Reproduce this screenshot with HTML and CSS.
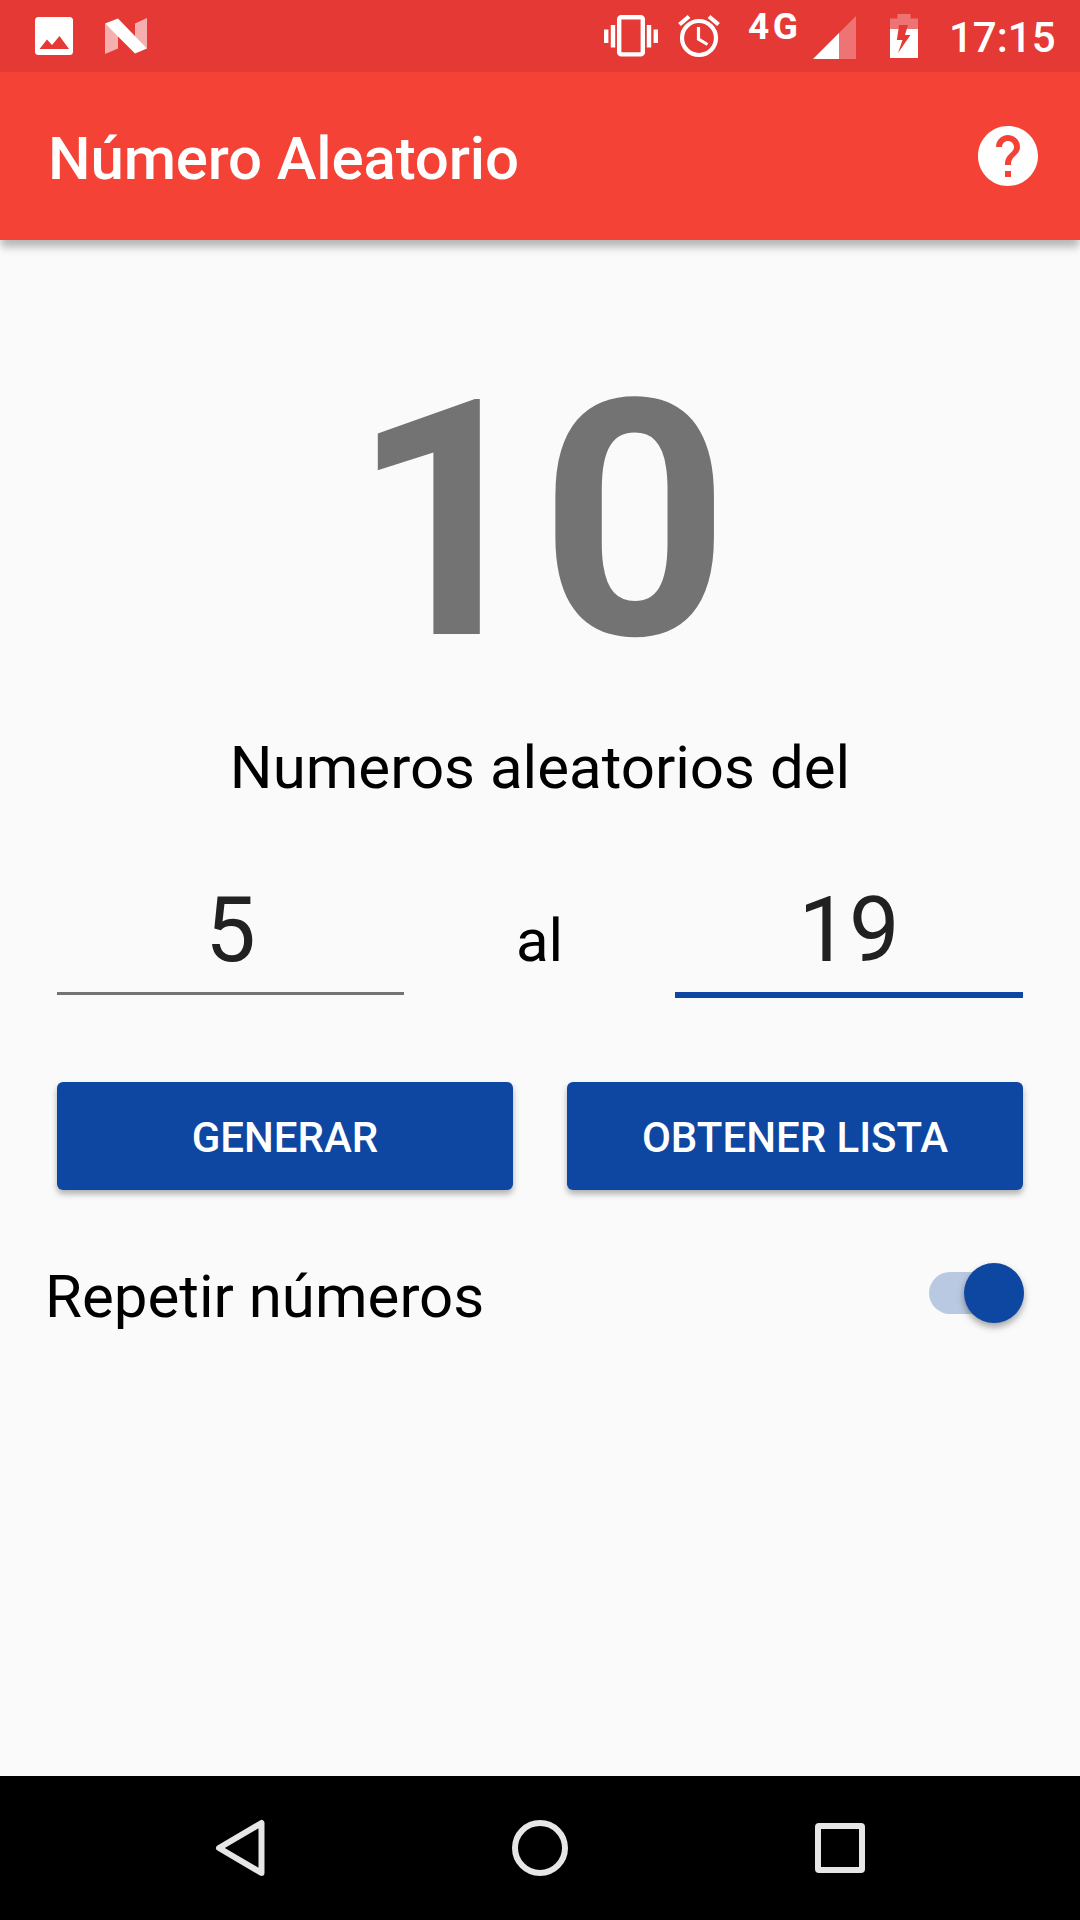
FILE: index.html
```html
<!DOCTYPE html>
<html lang="es">

<head>
    <meta charset="UTF-8">
    <meta name="viewport" content="width=device-width, initial-scale=1">
    <title>Número Aleatorio</title>
    <link rel="stylesheet" href="styles.css">
</head>

<body>

    <div class="status_bar">
        <svg class="icon_photo" width="38" height="38" viewBox="0 0 38 38">
            <rect width="38" height="38" rx="3.5" fill="#fff" />
            <path d="M4.5 32L12 22.5L17 28L24.5 19L34 32Z" fill="#e53935" />
        </svg>
        <svg class="icon_n" width="42" height="36" viewBox="0 0 42 36">
            <path d="M0 5.5L13 17.5V30.5L0 36ZM42 0V30.5L30 20V5.5Z" fill="#fff" opacity=".6" />
            <path d="M0 5.5L13 0.5L42 30.5L30 35.5Z" fill="#fff" />
        </svg>

        <svg class="icon_vibrate" width="54" height="42" viewBox="0 0 54 42">
            <rect x="15.2" y="2.2" width="23.6" height="37.2" rx="2" fill="none" stroke="#fff" stroke-width="4.4" />
            <path d="M0 14.5h4.4v13.5H0zM6.8 10h4.4v22.5H6.8zM42.8 10h4.4v22.5h-4.4zM49.6 14.5H54v13.5h-4.4z" fill="#fff" />
        </svg>
        <svg class="icon_alarm" width="42" height="44" viewBox="0 0 42 44">
            <circle cx="21" cy="24" r="17" fill="none" stroke="#fff" stroke-width="4.2" />
            <path d="M1.5 10.5L11 2.5M40.5 10.5L31 2.5" stroke="#fff" stroke-width="4.2" />
            <path d="M20.5 13V25L29.5 30.5" fill="none" stroke="#fff" stroke-width="3.2" />
        </svg>
        <span class="network">4G</span>
        <svg class="icon_signal" width="43" height="43" viewBox="0 0 43 43">
            <path d="M26 17V43H43V0Z" fill="#fff" opacity=".3" />
            <path d="M0 43L26 17V43Z" fill="#fff" />
        </svg>
        <svg class="icon_battery" width="28" height="44" viewBox="0 0 28 44">
            <path d="M0 4.5H7.500V0H20.500V4.500H28V15H16.800L18 11H9L8.500 15H0Z" fill="#fff" opacity=".3" />
            <path d="M0 15H8.500L6.800 26H12.500L8 39L20.500 21H15L16.800 15H28V44H0Z" fill="#fff" />
        </svg>
        <span class="clock">17:15</span>
    </div>

    <div class="toolbar">
        <h1>Número Aleatorio</h1>
        <svg class="icon_help" width="72" height="72" viewBox="0 0 24 24">
            <path fill="#fff" d="M12 2C6.480 2 2 6.480 2 12s4.480 10 10 10 10-4.480 10-10S17.520 2 12 2zm1 17h-2v-2h2v2zm2.070-7.750l-.9.920C13.450 12.900 13 13.500 13 15h-2v-.5c0-1.100.45-2.100 1.170-2.830l1.240-1.260c.37-.36.59-.86.59-1.410 0-1.100-.9-2-2-2s-2 .9-2 2H8c0-2.210 1.790-4 4-4s4 1.790 4 4c0 .88-.36 1.680-.93 2.250z" />
        </svg>
    </div>

    <div class="content">
        <div id="resultado" class="resultado">10</div>
        <p class="titulo">Numeros aleatorios del</p>

        <div class="rango">
            <input type="text" id="desde" value="5">
            <label for="hasta">al</label>
            <input type="text" id="hasta" class="active" value="19">
        </div>

        <div class="botones">
            <button type="button">GENERAR</button>
            <button type="button">OBTENER LISTA</button>
        </div>

        <div class="repetir">
            <span>Repetir números</span>
            <div class="switch">
                <div class="thumb"></div>
            </div>
        </div>
    </div>

    <div class="nav_bar">
        <svg width="60" height="60" viewBox="0 0 60 60">
            <path d="M51.500 5V55L9 30Z" />
        </svg>
        <svg width="60" height="60" viewBox="0 0 60 60">
            <circle cx="30" cy="30" r="25" />
        </svg>
        <svg width="60" height="60" viewBox="0 0 60 60">
            <rect x="8" y="8" width="44" height="44" rx="1" />
        </svg>
    </div>

</body>

</html>
```

FILE: styles.css
```css
* {
    box-sizing: border-box;
}

body {
    margin: 0;
    height: 1920px;
    display: flex;
    flex-direction: column;
    background-color: #fafafa;
    font-family: Roboto, sans-serif;
    color: #000;
}

/* Status bar */
.status_bar {
    display: flex;
    align-items: flex-start;
    height: 72px;
    padding-left: 35px;
    background-color: #e53935;
    color: white;
}

.status_bar svg {
    flex: none;
}

.icon_photo {
    margin-top: 17px;
}

.icon_n {
    margin: 18px 0 0 32px;
}

.icon_vibrate {
    margin: 15px 0 0 457px;
}

.icon_alarm {
    margin: 14px 0 0 20px;
}

.network {
    width: 65px;
    padding-left: 28px;
    font-size: 37px;
    font-weight: bold;
    line-height: 54px;
    letter-spacing: 3.5px;
    white-space: nowrap;
}

.icon_signal {
    margin: 16px 0 0 28px;
}

.icon_battery {
    margin: 14px 0 0 34px;
}

.clock {
    margin-left: 31px;
    font-size: 42px;
    font-weight: 500;
    line-height: 75px;
}

/* Toolbar */
.toolbar {
    display: flex;
    justify-content: space-between;
    align-items: center;
    height: 168px;
    padding: 0 36px 0 48px;
    background-color: #f44336;
    color: white;
    box-shadow: 0 8px 8px -1px rgba(0, 0, 0, 0.27);
}

.toolbar h1 {
    margin: 5px 0 0;
    font-size: 60px;
    font-weight: 500;
    line-height: 70px;
    letter-spacing: -0.15px;
}

/* Content */
.content {
    flex: 1;
    padding: 88px 57px 0;
}

.resultado {
    font-size: 330px;
    font-weight: bold;
    line-height: 388px;
    text-align: center;
    color: #737373;
}

.titulo {
    margin: 17px 0 67px;
    font-size: 60px;
    line-height: 70px;
    text-align: center;
}

.rango {
    display: flex;
    justify-content: space-between;
    align-items: flex-start;
    height: 128px;
}

.rango input {
    width: 347px;
    height: 125px;
    padding: 0 0 1px;
    border: none;
    border-bottom: 3px solid #737373;
    outline: none;
    background: none;
    font-family: inherit;
    font-size: 90px;
    line-height: 121px;
    text-align: center;
    color: #212121;
}

.rango input.active {
    width: 348px;
    height: 128px;
    border-bottom: 6px solid #0d47a1;
}

.rango label {
    font-size: 60px;
    line-height: 141px;
}

.botones {
    display: flex;
    gap: 54px;
    margin-top: 84px;
}

.botones button {
    flex: 1;
    height: 108px;
    padding: 3px 0 0;
    border: none;
    border-radius: 6px;
    background-color: #0d47a1;
    color: white;
    font-family: inherit;
    font-size: 42px;
    font-weight: 500;
    box-shadow: 0 4px 6px rgba(0, 0, 0, 0.3);
}

.repetir {
    display: flex;
    justify-content: space-between;
    align-items: flex-start;
    margin: 72px -1px 0 -12px;
    font-size: 60px;
    line-height: 70px;
}

/* Switch */
.switch {
    display: flex;
    align-items: center;
    justify-content: flex-end;
    width: 95px;
    height: 42px;
    margin-top: 10px;
    border-radius: 21px;
    background-color: #b9c9e2;
}

.thumb {
    flex: none;
    width: 60px;
    height: 60px;
    border-radius: 50%;
    background-color: #0d47a1;
    box-shadow: 0 4px 7px rgba(0, 0, 0, 0.35);
}

/* Navigation bar */
.nav_bar {
    display: flex;
    justify-content: center;
    align-items: center;
    gap: 240px;
    height: 144px;
    background-color: black;
}

.nav_bar svg {
    fill: none;
    stroke: #e6e6e6;
    stroke-width: 6;
    stroke-linejoin: round;
}
```
